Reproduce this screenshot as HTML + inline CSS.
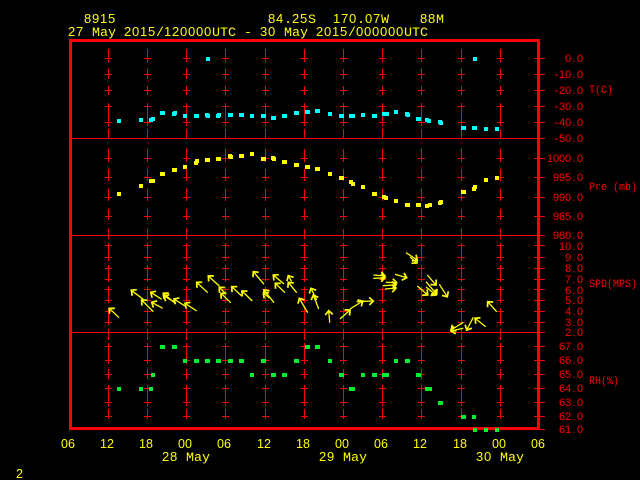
<!DOCTYPE html>
<html><head><meta charset="utf-8"><title>8915</title>
<style>
html,body{margin:0;padding:0;background:#000;width:640px;height:480px;overflow:hidden}
svg{display:block}
.y{fill:#ff0;font-family:"Liberation Sans",sans-serif;font-size:13px;letter-spacing:.77px}
.y .m{font-family:"Liberation Mono",monospace;font-size:13.33px;letter-spacing:0}
.b{fill:#ff0;font-family:"Liberation Sans",sans-serif;font-size:12.5px;letter-spacing:.05px}
.r{fill:#f00;font-family:"Liberation Sans",sans-serif;font-size:11px}
.r .m{font-family:"Liberation Mono",monospace;font-size:12px}
.s{fill:#f00;font-family:"Liberation Mono",monospace;font-size:10px}
</style></head><body>
<svg width="640" height="480" viewBox="0 0 640 480" xmlns="http://www.w3.org/2000/svg">
<defs>
<marker id="a" markerUnits="userSpaceOnUse" markerWidth="12" markerHeight="12" refX="8" refY="6" orient="auto"><path d="M4 2.2L8 6L4 9.8" fill="none" stroke="#ff0" stroke-width="1.7"/></marker>
<g id="c"><path fill="none" stroke="#f00" stroke-width="1" shape-rendering="crispEdges" d="M.5 49V62M.5 69V79M.5 86V95M.5 103V126M.5 129V138M.5 149V162M.5 169V181M.5 189V201M.5 209V220M.5 229V239M.5 243V261M.5 265V282M.5 287V303M.5 308V325M.5 329V340M.5 343V364M.5 369V379M.5 385V406M.5 409V419M-3 58.5H4M-3 74.5H4M-3 90.5H4M-3 106.5H4M-3 122.5H4M-3 158.5H4M-3 177.5H4M-3 197.5H4M-3 216.5H4M-3 245.5H4M-3 257.5H4M-3 268.5H4M-3 279.5H4M-3 289.5H4M-3 300.5H4M-3 311.5H4M-3 322.5H4M-3 346.5H4M-3 360.5H4M-3 374.5H4M-3 388.5H4M-3 402.5H4M-3 416.5H4"/></g>
</defs>
<rect width="640" height="480" fill="#000"/>
<use href="#c" x="108"/><use href="#c" x="147"/><use href="#c" x="186"/><use href="#c" x="225"/><use href="#c" x="265"/><use href="#c" x="304"/><use href="#c" x="343"/><use href="#c" x="382"/><use href="#c" x="421"/><use href="#c" x="461"/><use href="#c" x="500"/>
<path fill="none" stroke="#f00" stroke-width="1" shape-rendering="crispEdges" d="M70 138.5H545M70 235.5H545M70 332.5H545M534 58.5H545M534 74.5H545M534 90.5H545M534 106.5H545M534 122.5H545M534 158.5H545M534 177.5H545M534 197.5H545M534 216.5H545M534 245.5H545M534 257.5H545M534 268.5H545M534 279.5H545M534 289.5H545M534 300.5H545M534 311.5H545M534 322.5H545M534 346.5H545M534 360.5H545M534 374.5H545M534 388.5H545M534 402.5H545M534 416.5H545M534 429.5H545"/>
<rect x="70.5" y="40.5" width="468" height="388" fill="none" stroke="#f00" stroke-width="3" shape-rendering="crispEdges"/>

<g fill="#0ff" shape-rendering="crispEdges">
<rect x="117" y="119" width="4" height="4"/><rect x="139" y="118" width="4" height="4"/><rect x="149" y="118" width="4" height="4"/><rect x="151" y="117" width="4" height="4"/><rect x="160" y="111" width="5" height="4"/><rect x="172" y="112" width="4" height="4"/><rect x="173" y="111" width="4" height="4"/><rect x="183" y="114" width="4" height="4"/><rect x="194" y="114" width="5" height="4"/><rect x="205" y="113" width="4" height="4"/><rect x="206" y="114" width="4" height="4"/><rect x="216" y="114" width="4" height="4"/><rect x="217" y="113" width="4" height="4"/><rect x="228" y="113" width="5" height="4"/><rect x="239" y="113" width="5" height="4"/><rect x="250" y="114" width="4" height="4"/><rect x="261" y="114" width="5" height="4"/><rect x="271" y="116" width="5" height="4"/><rect x="282" y="114" width="5" height="4"/><rect x="294" y="111" width="5" height="4"/><rect x="305" y="110" width="5" height="4"/><rect x="315" y="109" width="5" height="4"/><rect x="328" y="112" width="4" height="4"/><rect x="339" y="114" width="5" height="4"/><rect x="349" y="114" width="6" height="4"/><rect x="361" y="113" width="4" height="4"/><rect x="372" y="114" width="5" height="4"/><rect x="382" y="112" width="7" height="4"/><rect x="394" y="110" width="4" height="4"/><rect x="405" y="112" width="4" height="4"/><rect x="406" y="113" width="4" height="4"/><rect x="416" y="117" width="5" height="4"/><rect x="425" y="118" width="4" height="4"/><rect x="427" y="119" width="4" height="4"/><rect x="438" y="120" width="4" height="4"/><rect x="439" y="121" width="4" height="4"/><rect x="461" y="126" width="5" height="4"/><rect x="472" y="126" width="5" height="4"/><rect x="484" y="127" width="4" height="4"/><rect x="495" y="127" width="4" height="4"/><rect x="206" y="57" width="4" height="4"/><rect x="473" y="57" width="4" height="4"/>
</g>
<g fill="#ff0" shape-rendering="crispEdges">
<rect x="117" y="192" width="4" height="4"/><rect x="139" y="184" width="4" height="4"/><rect x="149" y="179" width="6" height="4"/><rect x="160" y="172" width="5" height="4"/><rect x="172" y="168" width="5" height="4"/><rect x="183" y="165" width="4" height="4"/><rect x="194" y="161" width="4" height="4"/><rect x="195" y="159" width="4" height="4"/><rect x="205" y="158" width="5" height="4"/><rect x="216" y="157" width="5" height="4"/><rect x="228" y="154" width="4" height="4"/><rect x="229" y="155" width="4" height="4"/><rect x="239" y="154" width="5" height="4"/><rect x="250" y="152" width="4" height="4"/><rect x="261" y="157" width="5" height="4"/><rect x="271" y="156" width="4" height="4"/><rect x="272" y="157" width="4" height="4"/><rect x="282" y="160" width="5" height="4"/><rect x="294" y="163" width="5" height="4"/><rect x="305" y="165" width="5" height="4"/><rect x="315" y="167" width="5" height="4"/><rect x="328" y="172" width="4" height="4"/><rect x="339" y="176" width="5" height="4"/><rect x="349" y="180" width="4" height="4"/><rect x="351" y="182" width="4" height="4"/><rect x="361" y="185" width="4" height="4"/><rect x="372" y="192" width="5" height="4"/><rect x="382" y="195" width="4" height="4"/><rect x="384" y="196" width="4" height="4"/><rect x="394" y="199" width="4" height="4"/><rect x="405" y="203" width="5" height="4"/><rect x="416" y="203" width="5" height="4"/><rect x="425" y="204" width="4" height="4"/><rect x="428" y="203" width="4" height="4"/><rect x="438" y="201" width="4" height="4"/><rect x="439" y="200" width="4" height="4"/><rect x="461" y="190" width="5" height="4"/><rect x="472" y="187" width="4" height="4"/><rect x="473" y="185" width="4" height="4"/><rect x="484" y="178" width="4" height="4"/><rect x="495" y="176" width="4" height="4"/>
</g>
<g fill="#00f030" shape-rendering="crispEdges">
<rect x="160" y="345" width="5" height="4"/><rect x="172" y="345" width="5" height="4"/><rect x="183" y="359" width="4" height="4"/><rect x="194" y="359" width="5" height="4"/><rect x="205" y="359" width="5" height="4"/><rect x="216" y="359" width="5" height="4"/><rect x="228" y="359" width="5" height="4"/><rect x="239" y="359" width="5" height="4"/><rect x="261" y="359" width="5" height="4"/><rect x="294" y="359" width="5" height="4"/><rect x="305" y="345" width="5" height="4"/><rect x="315" y="345" width="5" height="4"/><rect x="151" y="373" width="4" height="4"/><rect x="250" y="373" width="4" height="4"/><rect x="271" y="373" width="5" height="4"/><rect x="282" y="373" width="5" height="4"/><rect x="117" y="387" width="4" height="4"/><rect x="139" y="387" width="4" height="4"/><rect x="149" y="387" width="4" height="4"/><rect x="328" y="359" width="4" height="4"/><rect x="339" y="373" width="5" height="4"/><rect x="361" y="373" width="4" height="4"/><rect x="372" y="373" width="5" height="4"/><rect x="382" y="373" width="7" height="4"/><rect x="416" y="373" width="5" height="4"/><rect x="349" y="387" width="6" height="4"/><rect x="394" y="359" width="4" height="4"/><rect x="405" y="359" width="5" height="4"/><rect x="425" y="387" width="7" height="4"/><rect x="438" y="401" width="5" height="4"/><rect x="461" y="415" width="5" height="4"/><rect x="472" y="415" width="4" height="4"/><rect x="473" y="428" width="4" height="4"/><rect x="484" y="428" width="4" height="4"/><rect x="495" y="428" width="4" height="4"/>
</g>

<g fill="none" stroke="#ff0" stroke-width="1.3" marker-end="url(#a)">
<path d="M119 317.7L109.3 308.3"/><path d="M143.3 299.3L131.3 290.3"/><path d="M153.3 311.7L141.7 300"/><path d="M161.7 299.3L150.7 292.3"/><path d="M162.7 308.3L151.7 302.3"/><path d="M175 303.3L163.3 293.3"/><path d="M176 303L164 296"/><path d="M186 306.7L174 299"/><path d="M196.7 311L185 303.3"/><path d="M207.7 292.7L196.7 282.3"/><path d="M219.3 286L208.3 276"/><path d="M225 293L219.3 287.3"/><path d="M230.7 302.7L221 293.3"/><path d="M241.7 296L231.7 286.7"/><path d="M252.3 301L242 291"/><path d="M264 284.3L253.3 271.7"/><path d="M274 302.7L264 290"/><path d="M269.5 298L263.5 293"/><path d="M284 284L273.3 275"/><path d="M285 292.7L275.3 283.3"/><path d="M291.7 281.7L288.3 275.7"/><path d="M296.7 292.7L288.3 282.3"/><path d="M307.7 312.7L299.3 298.3"/><path d="M316.7 300L311 288.3"/><path d="M318.7 309L313.3 295"/><path d="M329.7 322.7L328.7 310.7"/><path d="M340 319L350 310"/><path d="M350 309L362.7 301"/><path d="M356.7 301.7L373.3 301"/><path d="M373.3 278.3L385 277.7"/><path d="M373.3 275L385 276"/><path d="M395 274.3L406.7 277.7"/><path d="M386 282.3L396.7 282.7"/><path d="M382.7 285.7L396 285"/><path d="M385 289L396 288"/><path d="M406 252.7L417.3 260"/><path d="M410 257L417 263"/><path d="M417.3 286L427.7 295"/><path d="M427.3 275L436 285"/><path d="M426 281.7L436.7 294.3"/><path d="M426 287L436 295"/><path d="M439.3 284.3L447.3 296.7"/><path d="M463.3 322.3L451 330"/><path d="M463.3 328.3L451 331"/><path d="M473.3 317.3L466.7 330"/><path d="M485.7 326.7L475 318.3"/><path d="M496.7 311.7L487.7 301.7"/>
</g>

<text class="y" y="23"><tspan x="84">8915</tspan> <tspan x="268">84</tspan><tspan class="m" x="284">.</tspan><tspan x="292">25</tspan><tspan class="m" x="308">S</tspan> <tspan x="333">170</tspan><tspan class="m" x="357">.</tspan><tspan x="365">07</tspan><tspan class="m" x="381">W</tspan> <tspan x="420">88</tspan><tspan class="m" x="436">M</tspan></text>
<text class="y" y="36"><tspan x="68">27</tspan> <tspan class="m" x="92">May</tspan> <tspan x="124">2015</tspan><tspan class="m" x="156">/</tspan><tspan x="164">120000</tspan><tspan class="m" x="212">UTC</tspan> <tspan class="m" x="244">-</tspan> <tspan x="260">30</tspan> <tspan class="m" x="284">May</tspan> <tspan x="316">2015</tspan><tspan class="m" x="348">/</tspan><tspan x="356">000000</tspan><tspan class="m" x="404">UTC</tspan></text>

<g class="r">
<text x="565 572.5 577" y="62">0.0</text>
<text x="553 559 565 572.5 577" y="78"><tspan class="m">-</tspan>10.0</text>
<text x="553 559 565 572.5 577" y="94"><tspan class="m">-</tspan>20.0</text>
<text x="553 559 565 572.5 577" y="110"><tspan class="m">-</tspan>30.0</text>
<text x="553 559 565 572.5 577" y="126"><tspan class="m">-</tspan>40.0</text>
<text x="553 559 565 572.5 577" y="142"><tspan class="m">-</tspan>50.0</text>
<text x="547 553 559 565 572.5 577" y="162">1000.0</text>
<text x="553 559 565 572.5 577" y="181">995.0</text>
<text x="553 559 565 572.5 577" y="201">990.0</text>
<text x="553 559 565 572.5 577" y="220">985.0</text>
<text x="553 559 565 572.5 577" y="239">980.0</text>
<text x="559 565 572.5 577" y="250">10.0</text>
<text x="565 572.5 577" y="261">9.0</text>
<text x="565 572.5 577" y="272">8.0</text>
<text x="565 572.5 577" y="283">7.0</text>
<text x="565 572.5 577" y="294">6.0</text>
<text x="565 572.5 577" y="304">5.0</text>
<text x="565 572.5 577" y="315">4.0</text>
<text x="565 572.5 577" y="326">3.0</text>
<text x="565 572.5 577" y="336">2.0</text>
<text x="559 565 572.5 577" y="350">67.0</text>
<text x="559 565 572.5 577" y="364">66.0</text>
<text x="559 565 572.5 577" y="378">65.0</text>
<text x="559 565 572.5 577" y="392">64.0</text>
<text x="559 565 572.5 577" y="406">63.0</text>
<text x="559 565 572.5 577" y="420">62.0</text>
<text x="559 565 572.5 577" y="433">61.0</text>
</g>
<text class="s" transform="translate(589 93) scale(1 1.12)">T(C)</text>
<text class="s" transform="translate(589 190) scale(1 1.12)">Pre (mb)</text>
<text class="s" transform="translate(589 287) scale(1 1.12)">SPD(MPS)</text>
<text class="s" transform="translate(589 384) scale(1 1.12)">RH(%)</text>

<g class="b">
<text x="61" y="448">06</text><text x="100" y="448">12</text><text x="139" y="448">18</text><text x="178" y="448">00</text><text x="217" y="448">06</text><text x="257" y="448">12</text><text x="296" y="448">18</text><text x="335" y="448">00</text><text x="374" y="448">06</text><text x="413" y="448">12</text><text x="453" y="448">18</text><text x="492" y="448">00</text><text x="531" y="448">06</text>
</g>
<text class="y" y="461"><tspan x="162">28</tspan> <tspan class="m" x="186">May</tspan> <tspan x="319">29</tspan> <tspan class="m" x="343">May</tspan> <tspan x="476">30</tspan> <tspan class="m" x="500">May</tspan></text>
<text class="b" x="16" y="478">2</text>
</svg>
</body></html>
